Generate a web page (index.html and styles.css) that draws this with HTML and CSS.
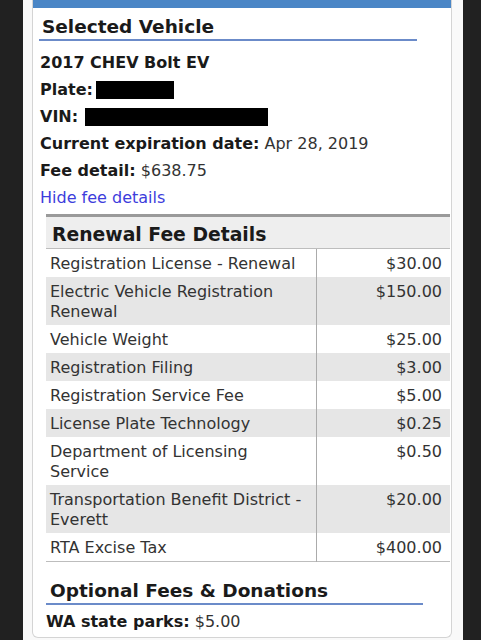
FILE: index.html
```html
<!DOCTYPE html>
<html lang="en">
<head>
<meta charset="utf-8">
<title>Selected Vehicle</title>
<link rel="stylesheet" href="styles.css">
</head>
<body>
<div class="page">
  <div class="panel">
    <div class="topbar"></div>
    <div class="vehicle">
      <h2 class="section-title">Selected Vehicle</h2>
      <div class="details">
        <div class="line"><b>2017 CHEV Bolt EV</b></div>
        <div class="line"><b>Plate:</b><span class="redact redact-plate"></span></div>
        <div class="line"><b>VIN:</b> <span class="redact redact-vin"></span></div>
        <div class="line"><b>Current expiration date:</b> <span class="val">Apr 28, 2019</span></div>
        <div class="line"><b>Fee detail:</b> <span class="val">$638.75</span></div>
        <div class="line"><a class="link" href="#">Hide fee details</a></div>
      </div>
    </div>
    <div class="fees">
      <table class="fee-table">
        <thead>
          <tr><th colspan="2">Renewal Fee Details</th></tr>
        </thead>
        <tbody>
          <tr><td class="name">Registration License - Renewal</td><td class="amt">$30.00</td></tr>
          <tr><td class="name">Electric Vehicle Registration Renewal</td><td class="amt">$150.00</td></tr>
          <tr><td class="name">Vehicle Weight</td><td class="amt">$25.00</td></tr>
          <tr><td class="name">Registration Filing</td><td class="amt">$3.00</td></tr>
          <tr><td class="name">Registration Service Fee</td><td class="amt">$5.00</td></tr>
          <tr><td class="name">License Plate Technology</td><td class="amt">$0.25</td></tr>
          <tr><td class="name">Department of Licensing Service</td><td class="amt">$0.50</td></tr>
          <tr><td class="name">Transportation Benefit District - Everett</td><td class="amt">$20.00</td></tr>
          <tr><td class="name">RTA Excise Tax</td><td class="amt">$400.00</td></tr>
        </tbody>
      </table>
      <h2 class="section-title optional">Optional Fees &amp; Donations</h2>
      <div class="parks"><b>WA state parks:</b> <span class="val">$5.00</span></div>
    </div>
  </div>
</div>
</body>
</html>
```
FILE: styles.css
```css
html, body {
  margin: 0;
  padding: 0;
}
body {
  background: #212121;
  font-family: "DejaVu Sans", Verdana, sans-serif;
  color: #1e1e1e;
}
.page {
  margin-left: 23px;
  width: 440px;
  min-height: 640px;
  background: #f9f9f9;
  padding: 0 11px 0 9px;
  box-sizing: border-box;
}
.panel {
  background: #fff;
  border: 1px solid #d4d4d4;
  border-top: none;
  border-radius: 0 0 6px 6px;
  padding-bottom: 3px;
}
.topbar {
  height: 8px;
  background: #4a86c6;
}
.vehicle {
  padding-left: 6px;
}
.section-title {
  margin: 8px 0 0;
  width: 378px;
  box-sizing: border-box;
  padding: 0 0 1px 3px;
  font-size: 18.5px;
  line-height: 22px;
  font-weight: bold;
  color: #1a1a1a;
  border-bottom: 2px solid #6b8bc9;
}
.details {
  margin-top: 8px;
  font-size: 16px;
  line-height: 27px;
  padding-left: 1px;
}
.line b {
  color: #1a1a1a;
}
.val {
  color: #333;
}
.redact {
  display: inline-block;
  background: #000;
  vertical-align: -4px;
}
.redact-plate {
  width: 78px;
  height: 18px;
  margin-left: 3px;
}
.redact-vin {
  width: 183px;
  height: 18px;
  margin-left: 2px;
}
.link {
  color: #3d3ddc;
  text-decoration: none;
}
.fees {
  margin: 3px 1px 0 13px;
}
.fee-table {
  width: 100%;
  border-collapse: collapse;
  border-top: 3px solid #9a9a9a;
  border-bottom: 1px solid #bdbdbd;
  font-size: 16px;
  color: #333;
}
.fee-table th {
  text-align: left;
  background: #eeeeee;
  font-size: 18.8px;
  font-weight: bold;
  color: #1a1a1a;
  line-height: 26px;
  padding: 5px 6px 0;
  border-bottom: 1px solid #bdbdbd;
}
.fee-table td {
  line-height: 20px;
  padding: 5px 4px 3px;
  vertical-align: top;
}
.fee-table tbody tr:nth-child(even) td {
  background: #e6e6e6;
}
.fee-table td.name {
  width: 258px;
  padding-right: 8px;
  border-right: 1px solid #ababab;
}
.fee-table td.amt {
  text-align: right;
  padding-right: 8px;
}
.section-title.optional {
  margin-top: 18px;
  margin-left: 0;
  width: 377px;
  padding-left: 4px;
}
.parks {
  margin-top: 5px;
  font-size: 16px;
  line-height: 24px;
}
.parks b {
  color: #1a1a1a;
}
```
